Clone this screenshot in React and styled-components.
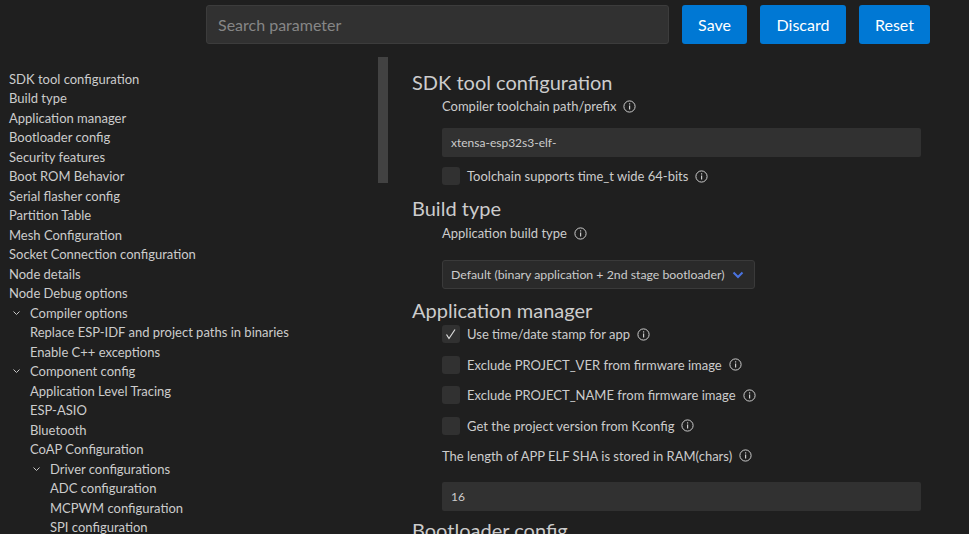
import React from "react";
import styled, { createGlobalStyle } from "styled-components";

const Global = createGlobalStyle`
  html, body { margin: 0; padding: 0; background: #1f1f1f; }
  body { font-family: Lato, "Open Sans", sans-serif; color: #cccccc; overflow: hidden; }
  * { box-sizing: border-box; }
`;

const Page = styled.div`
  width: 969px;
  height: 534px;
  overflow: hidden;
  background: #1f1f1f;
  display: flex;
  flex-direction: column;
`;

const Header = styled.div`
  height: 57px;
  flex: none;
  display: flex;
  justify-content: flex-end;
  align-items: flex-start;
  gap: 13px;
  padding: 5px 39px 0 0;
`;

const Search = styled.input`
  width: 463px;
  height: 39px;
  background: #313131;
  border: 1px solid #3c3c3c;
  border-radius: 3px;
  padding: 0 11px;
  color: #cccccc;
  font-family: inherit;
  font-size: 16px;
  outline: none;
  &::placeholder { color: #868686; }
`;

const Button = styled.button`
  height: 39px;
  width: ${(p) => p.$w}px;
  background: #0078d4;
  border: none;
  border-radius: 3px;
  color: #ffffff;
  font-family: inherit;
  font-size: 16px;
  padding: 0;
`;

const Body = styled.div`
  flex: 1;
  display: grid;
  grid-template-columns: 378px 10px 1fr;
  min-height: 0;
`;

const Sidebar = styled.ul`
  list-style: none;
  margin: 0;
  padding: 12px 0 0 0;
  overflow: hidden;
`;

const TreeItem = styled.li`
  display: flex;
  align-items: center;
  height: 19.5px;
  font-size: 13px;
  white-space: nowrap;
  padding-left: ${(p) => 9 + 20 * p.$depth + (p.$depth > 0 && !p.$parent ? 1 : 0)}px;
`;

const Chevron = styled.svg`
  width: 21px;
  height: 10px;
  flex: none;
`;

const Track = styled.div``;

const Thumb = styled.div`
  height: 126px;
  background: #424242;
`;

const Main = styled.div`
  padding: 12px 48px 0 24px;
  overflow: hidden;
`;

const Heading = styled.h2`
  margin: ${(p) => p.$mt || 0}px 0 0 0;
  font-size: 20px;
  line-height: 26px;
  font-weight: 400;
  color: #cccccc;
  white-space: nowrap;
`;

const Param = styled.div`
  margin: ${(p) => p.$mt || 0}px 0 0 30px;
  display: flex;
  align-items: center;
  gap: 7px;
  height: ${(p) => p.$h || 20}px;
  font-size: 13px;
  white-space: nowrap;
`;

const TextBox = styled.div`
  margin: ${(p) => p.$mt || 0}px 0 0 30px;
  height: 29px;
  background: #313131;
  border-radius: 2px;
  display: flex;
  align-items: center;
  padding-left: 9px;
  font-size: 12px;
  color: #cccccc;
`;

const Select = styled.div`
  margin: ${(p) => p.$mt || 0}px 0 0 30px;
  width: max-content;
  height: 29px;
  background: #2a2a2a;
  border: 1px solid #3a3a3a;
  border-radius: 3px;
  display: flex;
  align-items: center;
  gap: 8px;
  padding: 0 10px 0 8px;
  font-size: 12.3px;
  white-space: nowrap;
`;

const Box = styled.span`
  width: 18px;
  height: 18px;
  flex: none;
  border-radius: 3px;
  background: #313131;
  display: flex;
  align-items: center;
  justify-content: center;
`;

const Label = styled.span``;

const Info = () => (
  <svg width="13" height="13" viewBox="0 0 13 13" style={{ flex: "none" }}>
    <circle cx="6.5" cy="6.5" r="5.6" fill="none" stroke="#cccccc" strokeWidth="1" />
    <rect x="6" y="5.5" width="1.2" height="4" fill="#cccccc" />
    <rect x="6" y="3.3" width="1.2" height="1.2" fill="#cccccc" />
  </svg>
);

const ChevronDown = () => (
  <Chevron viewBox="0 0 21 10">
    <polyline points="4.5,3.5 7.5,6.5 10.5,3.5" fill="none" stroke="#c5c5c5" strokeWidth="1" />
  </Chevron>
);

const tree = [
  ["SDK tool configuration", 0],
  ["Build type", 0],
  ["Application manager", 0],
  ["Bootloader config", 0],
  ["Security features", 0],
  ["Boot ROM Behavior", 0],
  ["Serial flasher config", 0],
  ["Partition Table", 0],
  ["Mesh Configuration", 0],
  ["Socket Connection configuration", 0],
  ["Node details", 0],
  ["Node Debug options", 0],
  ["Compiler options", 0, true],
  ["Replace ESP-IDF and project paths in binaries", 1],
  ["Enable C++ exceptions", 1],
  ["Component config", 0, true],
  ["Application Level Tracing", 1],
  ["ESP-ASIO", 1],
  ["Bluetooth", 1],
  ["CoAP Configuration", 1],
  ["Driver configurations", 1, true],
  ["ADC configuration", 2],
  ["MCPWM configuration", 2],
  ["SPI configuration", 2],
];

const Check = ({ checked, label, mt }) => (
  <Param $mt={mt} $h={18}>
    <Box>
      {checked && (
        <svg width="12" height="12" viewBox="0 0 12 12">
          <polyline points="1.5,6.5 4,10.5 10,1.5" fill="none" stroke="#dddddd" strokeWidth="1.2" />
        </svg>
      )}
    </Box>
    <Label>{label}</Label>
    <Info />
  </Param>
);

export default function App() {
  return (
    <Page>
      <Global />
      <Header>
        <Search placeholder="Search parameter" />
        <Button $w={65}>Save</Button>
        <Button $w={86}>Discard</Button>
        <Button $w={71}>Reset</Button>
      </Header>
      <Body>
        <Sidebar>
          {tree.map(([name, depth, parent]) => (
            <TreeItem key={name} $depth={depth} $parent={parent}>
              {parent && <ChevronDown />}
              {name}
            </TreeItem>
          ))}
        </Sidebar>
        <Track>
          <Thumb />
        </Track>
        <Main>
          <Heading>SDK tool configuration</Heading>
          <Param $mt={1}>
            <Label>Compiler toolchain path/prefix</Label>
            <Info />
          </Param>
          <TextBox $mt={12}>xtensa-esp32s3-elf-</TextBox>
          <Check mt={10} label="Toolchain supports time_t wide 64-bits" />
          <Heading $mt={10}>Build type</Heading>
          <Param $mt={2}>
            <Label>Application build type</Label>
            <Info />
          </Param>
          <Select $mt={17}>
            <span>Default (binary application + 2nd stage bootloader)</span>
            <svg width="12" height="8" viewBox="0 0 12 8">
              <polyline points="1.5,1.5 6,6 10.5,1.5" fill="none" stroke="#4a73e0" strokeWidth="2" />
            </svg>
          </Select>
          <Heading $mt={8}>Application manager</Heading>
          <Check mt={2} checked label="Use time/date stamp for app" />
          <Check mt={12.5} label="Exclude PROJECT_VER from firmware image" />
          <Check mt={12.5} label="Exclude PROJECT_NAME from firmware image" />
          <Check mt={12.5} label="Get the project version from Kconfig" />
          <Param $mt={11}>
            <Label>The length of APP ELF SHA is stored in RAM(chars)</Label>
            <Info />
          </Param>
          <TextBox $mt={16}>16</TextBox>
          <Heading $mt={6}>Bootloader config</Heading>
        </Main>
      </Body>
    </Page>
  );
}
